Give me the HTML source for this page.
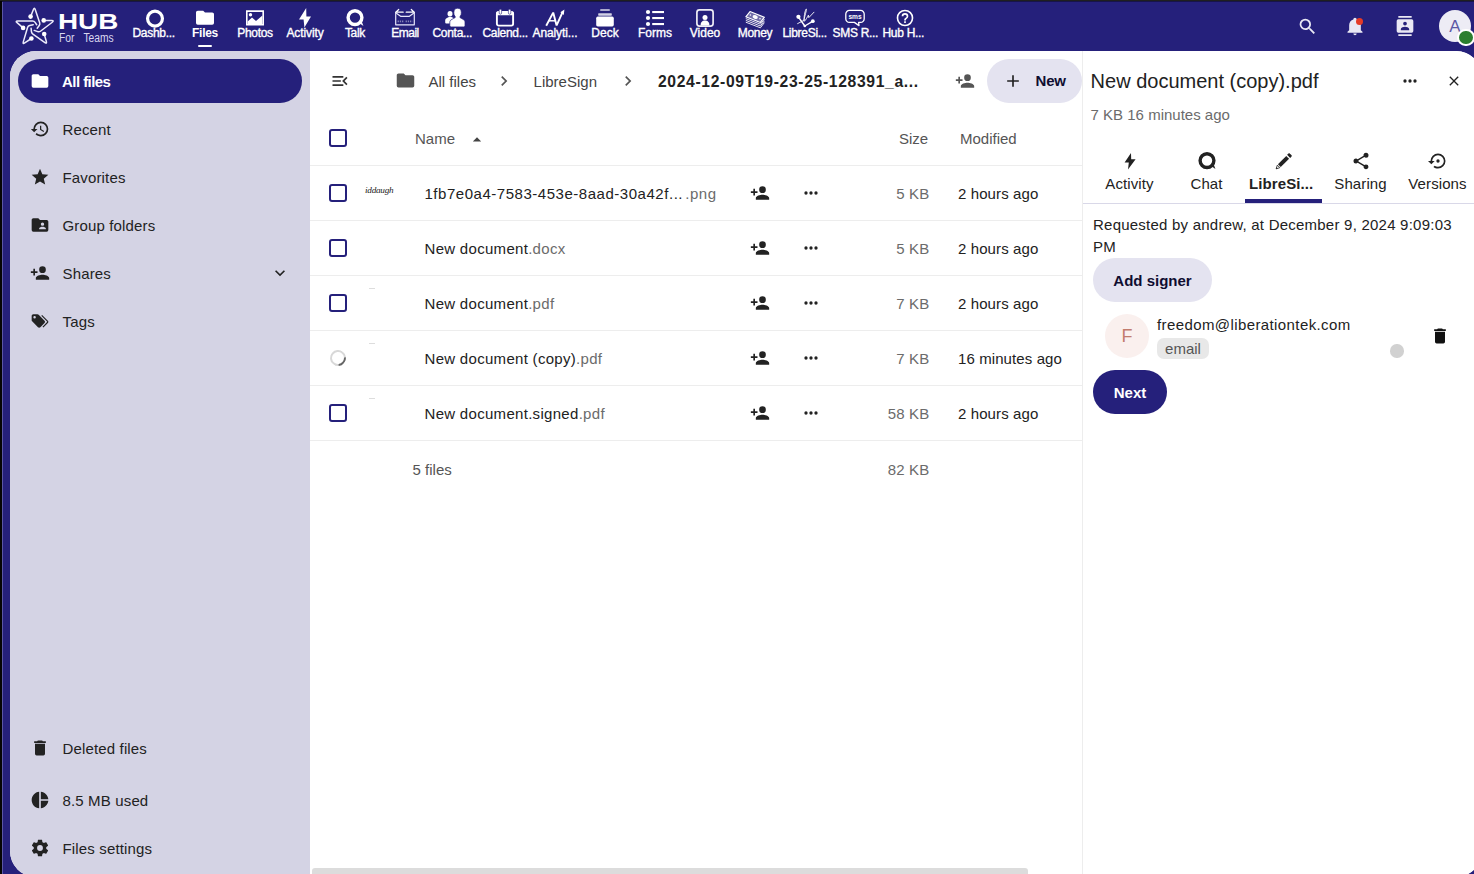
<!DOCTYPE html>
<html lang="en">
<head>
<meta charset="utf-8">
<title>Files - Hub For Teams</title>
<style>
*{box-sizing:border-box;margin:0;padding:0}
html,body{width:1474px;height:874px;overflow:hidden}
body{background:#25207b;font-family:"Liberation Sans",Arial,sans-serif;font-size:15px;color:#222;position:relative}
.abs{position:absolute}
#frame-l{left:0;top:0;width:2px;height:874px;background:#050505;z-index:50}
#frame-l2{left:2px;top:2px;width:1px;height:872px;background:#5a56a6;z-index:50}
#frame-t{left:0;top:0;width:1474px;height:1px;background:#1f1f1f;z-index:51}
#frame-t2{left:2px;top:1px;width:1472px;height:1px;background:#17144a;z-index:51}
/* header */
#header{left:0;top:2px;width:1474px;height:49px}
.app{position:absolute;top:0;width:50px;height:49px;color:#fff;text-align:center}
.app svg{position:absolute;left:15px;top:6px;width:20px;height:20px}
.app svg:not([fill]){fill:#fff}
.app span{position:absolute;left:-5px;width:60px;top:24px;font-size:12px;line-height:14px;letter-spacing:-.3px;white-space:nowrap;-webkit-text-stroke:.35px #fff}
.app span.tr{left:2.5px;text-align:left}
.app.active span{font-weight:bold;-webkit-text-stroke:0}
.app.active:after{content:"";position:absolute;left:18.4px;top:42.6px;width:13.4px;height:2.6px;border-radius:1.3px;background:#fff}

#hub{left:58px;top:9px;font-size:21.6px;line-height:22px;font-weight:bold;color:#fff;transform:scaleX(1.29);transform-origin:0 0;letter-spacing:0}
#forteams{left:58.7px;top:28.7px;font-size:12px;line-height:14px;color:#d9d8f0;white-space:nowrap;word-spacing:7.4px;transform:scaleX(.855);transform-origin:0 0}
.hi{fill:#e9e8f4}
#avatar{left:1439px;top:8.4px;width:32px;height:32px;border-radius:50%;background:#edecf5;color:#5c59a4;font-size:17px;line-height:34.6px;text-align:center}
#status{left:1457.4px;top:26.8px;width:17.4px;height:17.4px;border-radius:50%;background:#2b7e2f;border:2.1px solid #fff}
/* content container */
#content{left:10px;top:51px;width:1472px;height:826px;border-radius:26px;background:#fff;overflow:hidden}
#nav{left:0;top:0;width:300px;height:826px;background:#d4d3e4}
.nv{position:absolute;left:8px;width:284px;height:44px;border-radius:22px;font-size:15px;line-height:44px;color:#222;white-space:nowrap}
.nv svg{position:absolute;left:12px;top:12px;width:20px;height:20px;fill:#222}
.nv span{position:absolute;left:44.5px;top:1px;letter-spacing:.15px}
.nv.active span{letter-spacing:-.55px;left:44px}
.nv.active{background:#25207b;color:#fff;font-weight:bold}
.nv.active svg{fill:#fff}
/* main */
#main{left:300px;top:0;width:772px;height:826px;background:#fff}
.row{position:absolute;left:0;width:772px;height:55px;border-bottom:1px solid #ededed}
.cb{position:absolute;left:19px;width:18px;height:18px;border:2px solid #25207b;border-radius:3px;background:#fff}
.fn{position:absolute;left:114.5px;letter-spacing:.3px;font-size:15px;line-height:20px;white-space:nowrap;color:#222}
.fn i{font-style:normal;color:#6b6b6b}
.sz{position:absolute;right:152.5px;letter-spacing:.2px;font-size:15px;line-height:20px;color:#6b6b6b;white-space:nowrap;text-align:right}
.md{position:absolute;left:648px;letter-spacing:.1px;font-size:15px;line-height:20px;color:#222;white-space:nowrap}
.ic{position:absolute;fill:#222}

.bc{position:absolute;top:20.8px;font-size:15px;line-height:20px;color:#444;white-space:nowrap}
.bc.cur{font-weight:bold;color:#222;font-size:15.7px;letter-spacing:.65px}
#newbtn{left:677px;top:8px;width:95px;height:44px;border-radius:22px;background:#e4e3f0;font-weight:bold;color:#0f0d31}
#newbtn span{position:absolute;left:48.5px;top:12px;font-size:15px;line-height:20px;letter-spacing:-.2px}
.hd{position:absolute;top:17.5px;font-size:15px;line-height:20px;color:#555;white-space:nowrap}
.ft{position:absolute;font-size:15px;line-height:20px;color:#555;white-space:nowrap}
.spin{position:absolute;left:20px;top:19px;width:16px;height:16px;border-radius:50%;border:2px solid #d8d8d8;border-right-color:#666;transform:rotate(40deg)}
.sig{position:absolute;left:55px;top:18.4px;font-family:"Liberation Serif",serif;font-style:italic;font-size:9.2px;line-height:12px;color:#1a1a1a;letter-spacing:-.25px}
.pdfm{position:absolute;left:59px;top:12px;width:6px;height:1px;background:#ddd}
/* right sidebar */
#side{left:1072px;top:0;width:400px;height:826px;background:#fff}
#stitle{font-size:20px;line-height:24px;color:#222;white-space:nowrap}
#ssub{font-size:15px;line-height:20px;color:#6b6b6b;white-space:nowrap}
.tab{position:absolute;width:77px;height:52px;text-align:center;font-size:15px;color:#222}
.tab svg{position:absolute;left:28.5px;top:3.8px;fill:#222}
.tab span{position:absolute;left:0;width:77px;top:27px;line-height:20px;white-space:nowrap}
.tab.act span{font-weight:bold;left:4px;text-align:left}
.tab span{letter-spacing:.1px}
#req{width:372px;font-size:15px;line-height:22px;color:#222;letter-spacing:.23px}
.pill{height:44px;border-radius:22px;font-size:15px;font-weight:bold;text-align:center;line-height:44px;white-space:nowrap}
.pill span{position:relative;top:.5px}
#fav{width:44px;height:44px;border-radius:50%;background:#faf0ee;color:#c27c6e;font-size:18px;line-height:44px;text-align:center}
#mail{font-size:15px;line-height:20px;color:#222;white-space:nowrap;letter-spacing:.4px}
#chip{width:52px;height:21px;border-radius:7px;background:#e8e8e8;color:#555;font-size:15px;line-height:21px;text-align:center}
</style>
</head>
<body>
<div class="abs" id="frame-l"></div><div class="abs" id="frame-l2"></div>
<div class="abs" id="frame-t"></div><div class="abs" id="frame-t2"></div>

<div class="abs" id="header">
  <svg class="abs" style="left:12px;top:2px" width="48" height="44" viewBox="0 0 48 44" fill="none" stroke="#ecebfb" stroke-width="1.5" stroke-linejoin="round" stroke-linecap="round">
    <path d="M18.6,12.6L21.43,5.42Q22.38,3.00 23.21,5.46L27.69,18.68Q28.20,20.20 27.24,21.48L25.2,24.2"/>
    <path d="M31.7,16.4L39.73,16.61Q42.33,16.67 40.26,18.25L28.47,27.23Q27.20,28.20 25.69,27.66L22.2,26.4"/>
    <path d="M32.2,30L34.36,37.54Q35.08,40.04 32.95,38.55L20.91,30.12Q19.60,29.20 19.44,27.61L19.1,24.2"/>
    <path d="M19.4,34.5L12.71,38.92Q10.54,40.35 11.28,37.86L15.64,23.23Q16.10,21.70 17.67,21.39L21.2,20.7"/>
    <path d="M11.1,23.9L5.04,18.69Q3.07,16.99 5.67,17.01L20.60,17.09Q22.20,17.10 23.11,18.41L24.7,20.7"/>
    <g fill="#fff" stroke="none"><circle cx="18.6" cy="12.6" r="2.3"/><circle cx="31.7" cy="16.4" r="2.3"/><circle cx="32.2" cy="30" r="2.3"/><circle cx="19.4" cy="34.5" r="2.3"/><circle cx="11.1" cy="23.9" r="2.3"/></g>
  </svg>
  <div class="abs" id="hub">HUB</div>
  <div class="abs" id="forteams">For Teams</div>
  <div class="app" style="left:130px"><svg viewBox="0 0 20 20"><circle cx="10" cy="10.6" r="7.45" fill="none" stroke="#fff" stroke-width="3.2"/></svg><span class="tr">Dashb...</span></div>
  <div class="app active" style="left:180px"><svg viewBox="0 0 20 20"><path d="M8.2,2.8H2.8C1.8,2.8 1,3.6 1,4.6V15A1.8,1.8 0 0,0 2.8,16.8H17.2A1.8,1.8 0 0,0 19,15V6.4C19,5.4 18.2,4.6 17.2,4.6H10L8.2,2.8Z"/></svg><span>Files</span></div>
  <div class="app" style="left:230px"><svg viewBox="0 0 20 20"><path fill-rule="evenodd" d="M1,2.3H19V17.5H1Z M2.6,3.9V15.9H17.4V3.9Z"/><path d="M2.6,15.9V13.6L7,9.4L11,13L17.4,7.4V15.9Z"/><circle cx="5.5" cy="6.7" r="1.7"/></svg><span>Photos</span></div>
  <div class="app" style="left:280px"><svg viewBox="0 0 20 20"><path d="M11.2,0L4,11.4H8.6L9.4,19.6L16,8.4H11.4Z"/></svg><span style="letter-spacing:-0.1px">Activity</span></div>
  <div class="app" style="left:330px"><svg viewBox="0 0 20 20"><circle cx="10" cy="9.6" r="6.9" fill="none" stroke="#fff" stroke-width="3.4"/><path d="M13.5,14.5L18.4,17.9L16.4,12.4Z"/></svg><span>Talk</span></div>
  <div class="app" style="left:380px"><svg viewBox="0 0 20 20" fill="none" stroke="#e6e5fa" stroke-width="1.2" stroke-linejoin="round" stroke-linecap="round"><path d="M0.7,4.3V16.8H19.3V4.3"/><path d="M1.4,5.3L5.6,8.3H14.4L18.6,5.3"/><path d="M0.8,4.2H8.2M11.2,4.2H19.2M3.7,1.5L0.8,4.2M16.3,1.5L19.2,4.2" stroke="#fff"/><path d="M2.6,13.4H8.6M10.6,13.4H17.4" stroke-dasharray="1.3 .9" stroke-width="1.7" stroke-linecap="butt" opacity=".5"/></svg><span style="letter-spacing:-0.5px">Email</span></div>
  <div class="app" style="left:430px"><svg viewBox="0 0 20 20"><ellipse cx="5" cy="5.8" rx="2.5" ry="2.8"/><path d="M0.2,14.4V12.2C0.2,10.6 2.6,9.8 4,9.1H6.4C7.6,9.6 8.6,10 9.4,10.8V15.4H1.2A1,1 0 0,1 0.2,14.4Z"/><ellipse cx="12.6" cy="4.7" rx="3.75" ry="4.45" stroke="#25207b" stroke-width=".7"/><path d="M4.8,17.5V13.8C4.8,11.6 8.8,10.8 10.6,9.3H14.6C16.4,10.8 20,11.6 20,13.8V17.5A1.4,1.4 0 0,1 18.6,18.9H6.2A1.4,1.4 0 0,1 4.8,17.5Z" stroke="#25207b" stroke-width=".7"/><rect x="10.6" y="7.6" width="4" height="3" stroke="none"/></svg><span class="tr">Conta...</span></div>
  <div class="app" style="left:480px"><svg viewBox="0 0 20 20"><rect x="1.9" y="4" width="16.2" height="13.6" rx="1.8" fill="none" stroke="#fff" stroke-width="1.9"/><rect x="1.2" y="3.6" width="17.6" height="3.6" rx="1.6"/><rect x="4.2" y="1.2" width="2.4" height="5" rx="1.2" stroke="#25207b" stroke-width=".6"/><rect x="13.4" y="1.2" width="2.4" height="5" rx="1.2" stroke="#25207b" stroke-width=".6"/></svg><span class="tr">Calend...</span></div>
  <div class="app" style="left:530px"><svg viewBox="0 0 20 20" fill="none" stroke="#fff" stroke-width="1.9" stroke-linejoin="miter"><path d="M1.2,17.8L8.2,4.6L11.6,17.4L17.6,4.2" stroke-linejoin="bevel"/><path d="M3.6,12.8H10.2" stroke-width="1.5"/><path d="M19.4,1.6L18.8,7L15.4,4.2Z" fill="#fff" stroke="none"/></svg><span style="letter-spacing:-0.1px" class="tr">Analyti...</span></div>
  <div class="app" style="left:580px"><svg viewBox="0 0 20 20"><rect x="5.2" y="1" width="9.6" height="2.1" rx=".6" opacity=".62"/><rect x="3.2" y="5.2" width="13.6" height="2.5" rx=".6" opacity=".8"/><rect x="1.2" y="8.6" width="17.6" height="9.8" rx="1.6"/></svg><span style="letter-spacing:0.05px">Deck</span></div>
  <div class="app" style="left:630px"><svg viewBox="0 0 20 20"><circle cx="3" cy="4" r="2.1"/><circle cx="3" cy="10" r="2.1"/><circle cx="3" cy="16" r="2.1"/><rect x="7.2" y="3" width="11.8" height="2.1"/><rect x="7.2" y="9" width="11.8" height="2.1"/><rect x="7.2" y="15" width="11.8" height="2.1"/></svg><span style="letter-spacing:0px">Forms</span></div>
  <div class="app" style="left:680px"><svg viewBox="0 0 20 20"><rect x="1.9" y="1.9" width="16.2" height="16.2" rx="2.6" fill="none" stroke="#fff" stroke-width="1.7" opacity=".92"/><circle cx="10" cy="9.4" r="2.5"/><path d="M5.6,17.4C5.6,14 7.6,12.6 10,12.6C12.4,12.6 14.4,14 14.4,17.4Z"/></svg><span style="letter-spacing:0px">Video</span></div>
  <div class="app" style="left:730px"><svg style="top:7px" viewBox="0 0 20 20" fill="none" stroke="#fff" stroke-width="1.1" stroke-linejoin="round"><path d="M5,2.6L19.4,8.2L15.4,13.4L0.8,7.8Z" fill="#fff" fill-opacity=".35"/><ellipse cx="10.2" cy="8" rx="2.7" ry="1.9" transform="rotate(21 10.2 8)" fill="#fff" stroke="none"/><path d="M0.8,9.6L15.4,15.2L19.4,10M0.8,11.4L15.4,17L19.4,11.8M0.8,13.2L15.4,18.8L19.4,13.6" stroke-width=".9"/><circle cx="5.4" cy="6" r=".8" fill="#fff" stroke="none"/><circle cx="15" cy="9.8" r=".8" fill="#fff" stroke="none"/></svg><span>Money</span></div>
  <div class="app" style="left:780px"><svg viewBox="0 0 20 20" fill="none" stroke="#fff" stroke-width="1.1" stroke-linecap="round" stroke-linejoin="round"><path d="M3.4,9L9.8,18L17.6,13.4" stroke-width="1.4"/><circle cx="3.4" cy="8.8" r="2.1" fill="#fff" stroke="none"/><circle cx="17.8" cy="13.2" r="1.9" fill="#fff" stroke="none"/><circle cx="9.8" cy="18" r="1.3" fill="#fff" stroke="none"/><path d="M2.6,15.6L8.8,12.4C9.8,8 11.6,2.4 11.4,1C10.6,0.6 8.6,8 9.2,13.4C11,12 12.4,8.8 13.4,7.2L13.8,9.6L19,4.2" stroke-width=".9"/></svg><span class="tr">LibreSi...</span></div>
  <div class="app" style="left:830px"><svg viewBox="0 0 20 20"><path d="M4.4,2.4H15.6A3.6,3.6 0 0,1 19.2,6V10.8A3.6,3.6 0 0,1 15.6,14.4H13.6L14,17.6L9.4,14.4H4.4A3.6,3.6 0 0,1 0.8,10.8V6A3.6,3.6 0 0,1 4.4,2.4Z" fill="none" stroke="#fff" stroke-width="1.3" stroke-linejoin="round"/><text x="10" y="10.6" font-family="Liberation Sans,Arial,sans-serif" font-size="6.6" font-weight="bold" text-anchor="middle" fill="#fff">sms</text></svg><span class="tr">SMS R...</span></div>
  <div class="app" style="left:880px"><svg viewBox="0 0 24 24"><path d="M11,18H13V16H11V18M12,2A10,10 0 0,0 2,12A10,10 0 0,0 12,22A10,10 0 0,0 22,12A10,10 0 0,0 12,2M12,20C7.59,20 4,16.41 4,12C4,7.59 7.59,4 12,4C16.41,4 20,7.59 20,12C20,16.41 16.41,20 12,20M12,6A4,4 0 0,0 8,10H10A2,2 0 0,1 12,8A2,2 0 0,1 14,10C14,12 11,11.75 11,15H13C13,12.75 16,12.5 16,10A4,4 0 0,0 12,6Z"/></svg><span class="tr">Hub H...</span></div>
  <svg class="abs hi" style="left:1297px;top:14px" width="21" height="21" viewBox="0 0 24 24"><path d="M9.5,3A6.5,6.5 0 0,1 16,9.5C16,11.11 15.41,12.59 14.44,13.73L14.71,14H15.5L20.5,19L19,20.5L14,15.5V14.71L13.73,14.44C12.59,15.41 11.11,16 9.5,16A6.5,6.5 0 0,1 3,9.5A6.5,6.5 0 0,1 9.5,3M9.5,5C7,5 5,7 5,9.5C5,12 7,14 9.5,14C12,14 14,12 14,9.5C14,7 12,5 9.5,5Z"/></svg>
  <svg class="abs hi" style="left:1345px;top:14px" width="20" height="20" viewBox="0 0 24 24"><path d="M21,19V20H3V19L5,17V11C5,7.9 7.03,5.17 10,4.29C10,4.19 10,4.1 10,4A2,2 0 0,1 12,2A2,2 0 0,1 14,4C14,4.1 14,4.19 14,4.29C16.97,5.17 19,7.9 19,11V17L21,19M14,21A2,2 0 0,1 12,23A2,2 0 0,1 10,21"/></svg>
  <div class="abs" style="left:1356px;top:16px;width:7px;height:7px;border-radius:50%;background:#e53a27"></div>
  <svg class="abs hi" style="left:1395px;top:14px" width="20" height="20" viewBox="0 0 24 24"><path d="M20,0H4V2H20V0M4,24H20V22H4V24M20,4H4A2,2 0 0,0 2,6V18A2,2 0 0,0 4,20H20A2,2 0 0,0 22,18V6A2,2 0 0,0 20,4M12,6.75A2.25,2.25 0 0,1 14.25,9A2.25,2.25 0 0,1 12,11.25A2.25,2.25 0 0,1 9.75,9A2.25,2.25 0 0,1 12,6.75M17,17H7V15.5C7,13.83 10.33,13 12,13C13.67,13 17,13.83 17,15.5V17Z"/></svg>
  <div class="abs" id="avatar">A</div>
  <div class="abs" id="status"></div>
</div>

<div class="abs" id="content">
  <div class="abs" id="nav">
    <div class="nv active" style="top:8px"><svg viewBox="0 0 24 24"><path d="M10,4H4C2.89,4 2,4.89 2,6V18A2,2 0 0,0 4,20H20A2,2 0 0,0 22,18V8C22,6.89 21.1,6 20,6H12L10,4Z"/></svg><span>All files</span></div>
    <div class="nv" style="top:56px"><svg viewBox="0 0 24 24"><path d="M13.5,8H12V13L16.28,15.54L17,14.33L13.5,12.25V8M13,3A9,9 0 0,0 4,12H1L4.96,16.03L9,12H6A7,7 0 0,1 13,5A7,7 0 0,1 20,12A7,7 0 0,1 13,19C11.07,19 9.32,18.21 8.06,16.94L6.64,18.36C8.27,20 10.5,21 13,21A9,9 0 0,0 22,12A9,9 0 0,0 13,3"/></svg><span>Recent</span></div>
    <div class="nv" style="top:104px"><svg viewBox="0 0 24 24"><path d="M12,17.27L18.18,21L16.54,13.97L22,9.24L14.81,8.62L12,2L9.19,8.62L2,9.24L7.45,13.97L5.82,21L12,17.27Z"/></svg><span>Favorites</span></div>
    <div class="nv" style="top:152px"><svg viewBox="0 0 24 24"><path d="M19,17H11V16C11,14.67 13.67,14 15,14C16.33,14 19,14.67 19,16M15,9A2,2 0 0,1 17,11A2,2 0 0,1 15,13A2,2 0 0,1 13,11C13,9.89 13.9,9 15,9M20,6H12L10,4H4C2.89,4 2,4.89 2,6V18A2,2 0 0,0 4,20H20A2,2 0 0,0 22,18V8C22,6.89 21.1,6 20,6Z"/></svg><span>Group folders</span></div>
    <div class="nv" style="top:200px"><svg viewBox="0 0 24 24"><path d="M15,14C12.33,14 7,15.33 7,18V20H23V18C23,15.33 17.67,14 15,14M6,10V7H4V10H1V12H4V15H6V12H9V10M15,12A4,4 0 0,0 19,8A4,4 0 0,0 15,4A4,4 0 0,0 11,8A4,4 0 0,0 15,12Z"/></svg><span>Shares</span><svg style="left:252px" viewBox="0 0 24 24"><path d="M7.41,8.58L12,13.17L16.59,8.58L18,10L12,16L6,10L7.41,8.58Z"/></svg></div>
    <div class="nv" style="top:248px"><svg viewBox="0 0 24 24"><path d="M5.5,9A1.5,1.5 0 0,0 7,7.5A1.5,1.5 0 0,0 5.5,6A1.5,1.5 0 0,0 4,7.5A1.5,1.5 0 0,0 5.5,9M17.41,11.58C17.77,11.94 18,12.44 18,13C18,13.55 17.78,14.05 17.41,14.41L12.41,19.41C12.05,19.77 11.55,20 11,20C10.45,20 9.95,19.78 9.58,19.41L2.59,12.42C2.22,12.05 2,11.55 2,11V6C2,4.89 2.89,4 4,4H9C9.55,4 10.05,4.22 10.41,4.58L17.41,11.58M13.54,5.71L14.54,4.71L21.41,11.58C21.78,11.94 22,12.45 22,13C22,13.55 21.78,14.05 21.42,14.41L16.04,19.79L15.04,18.79L20.75,13L13.54,5.71Z"/></svg><span>Tags</span></div>
    <div class="nv" style="top:675px"><svg viewBox="0 0 24 24"><path d="M19,4H15.5L14.5,3H9.5L8.5,4H5V6H19M6,19A2,2 0 0,0 8,21H16A2,2 0 0,0 18,19V7H6V19Z"/></svg><span>Deleted files</span></div>
    <div class="nv" style="top:727px"><svg viewBox="0 0 24 24"><path d="M11,2V22C5.9,21.5 2,17.2 2,12C2,6.8 5.9,2.5 11,2M13,2V11H22C21.5,6.2 17.8,2.5 13,2M13,13V22C17.7,21.5 21.5,17.8 22,13H13Z"/></svg><span>8.5 MB used</span></div>
    <div class="nv" style="top:775px"><svg viewBox="0 0 24 24"><path d="M12,15.5A3.5,3.5 0 0,1 8.5,12A3.5,3.5 0 0,1 12,8.5A3.5,3.5 0 0,1 15.5,12A3.5,3.5 0 0,1 12,15.5M19.43,12.97C19.47,12.65 19.5,12.33 19.5,12C19.5,11.67 19.47,11.34 19.43,11L21.54,9.37C21.73,9.22 21.78,8.95 21.66,8.73L19.66,5.27C19.54,5.05 19.27,4.96 19.05,5.05L16.56,6.05C16.04,5.66 15.5,5.32 14.87,5.07L14.5,2.42C14.46,2.18 14.25,2 14,2H10C9.75,2 9.54,2.18 9.5,2.42L9.13,5.07C8.5,5.32 7.96,5.66 7.44,6.05L4.95,5.05C4.73,4.96 4.46,5.05 4.34,5.27L2.34,8.73C2.21,8.95 2.27,9.22 2.46,9.37L4.57,11C4.53,11.34 4.5,11.67 4.5,12C4.5,12.33 4.53,12.65 4.57,12.97L2.46,14.63C2.27,14.78 2.21,15.05 2.34,15.27L4.34,18.73C4.46,18.95 4.73,19.03 4.95,18.95L7.44,17.94C7.96,18.34 8.5,18.68 9.13,18.93L9.5,21.58C9.54,21.82 9.75,22 10,22H14C14.25,22 14.46,21.82 14.5,21.58L14.87,18.93C15.5,18.67 16.04,18.34 16.56,17.94L19.05,18.95C19.27,19.03 19.54,18.95 19.66,18.73L21.66,15.27C21.78,15.05 21.73,14.78 21.54,14.63L19.43,12.97Z"/></svg><span>Files settings</span></div>
  </div>
  <div class="abs" id="main">
    <svg class="ic" style="left:19.6px;top:20px;fill:#333" width="20" height="20" viewBox="0 0 24 24"><path d="M21,15.61L19.59,17L14.58,12L19.59,7L21,8.39L17.44,12L21,15.61M3,6H16V8H3V6M3,13V11H13V13H3M3,18V16H16V18H3Z"/></svg>
    <svg class="ic" style="left:85.4px;top:19.4px;fill:#555" width="21" height="21" viewBox="0 0 24 24"><path d="M10,4H4C2.89,4 2,4.89 2,6V18A2,2 0 0,0 4,20H20A2,2 0 0,0 22,18V8C22,6.89 21.1,6 20,6H12L10,4Z"/></svg>
    <div class="bc" style="left:118.5px">All files</div>
    <svg class="ic" style="left:183.5px;top:20px;fill:#555" width="20" height="20" viewBox="0 0 24 24"><path d="M8.59,16.58L13.17,12L8.59,7.41L10,6L16,12L10,18L8.59,16.58Z"/></svg>
    <div class="bc" style="left:223.6px">LibreSign</div>
    <svg class="ic" style="left:308px;top:20px;fill:#555" width="20" height="20" viewBox="0 0 24 24"><path d="M8.59,16.58L13.17,12L8.59,7.41L10,6L16,12L10,18L8.59,16.58Z"/></svg>
    <div class="bc cur" style="left:348px">2024-12-09T19-23-25-128391_a...</div>
    <svg class="ic" style="left:645px;top:20px;fill:#555" width="20" height="20" viewBox="0 0 24 24"><path d="M15,14C12.33,14 7,15.33 7,18V20H23V18C23,15.33 17.67,14 15,14M6,10V7H4V10H1V12H4V15H6V12H9V10M15,12A4,4 0 0,0 19,8A4,4 0 0,0 15,4A4,4 0 0,0 11,8A4,4 0 0,0 15,12Z"/></svg>
    <div class="abs" id="newbtn"><svg class="ic" style="left:16px;top:12px;fill:#222" width="20" height="20" viewBox="0 0 24 24"><path d="M19,13H13V19H11V13H5V11H11V5H13V11H19V13Z"/></svg><span>New</span></div>

    <div class="row" style="top:60px">
      <div class="cb" style="top:18px"></div>
      <div class="hd" style="left:105px">Name</div>
      <svg class="ic" style="left:157px;top:18px;fill:#444" width="20" height="20" viewBox="0 0 24 24"><path d="M7,15L12,10L17,15H7Z"/></svg>
      <div class="hd" style="left:589px">Size</div>
      <div class="hd" style="left:650px">Modified</div>
    </div>
    <div class="row" style="top:115px"><div class="cb" style="top:18px"></div><div class="sig">iddaugh</div>
      <div class="fn" style="top:17.5px;letter-spacing:.53px">1fb7e0a4-7583-453e-8aad-30a42f...<i style="margin-left:-2.5px"> .png</i></div>
      <svg class="ic" style="left:440px;top:17px" width="20" height="20" viewBox="0 0 24 24"><path d="M15,14C12.33,14 7,15.33 7,18V20H23V18C23,15.33 17.67,14 15,14M6,10V7H4V10H1V12H4V15H6V12H9V10M15,12A4,4 0 0,0 19,8A4,4 0 0,0 15,4A4,4 0 0,0 11,8A4,4 0 0,0 15,12Z"/></svg>
      <svg class="ic" style="left:491px;top:17px" width="20" height="20" viewBox="0 0 24 24"><path d="M16,12A2,2 0 0,1 18,10A2,2 0 0,1 20,12A2,2 0 0,1 18,14A2,2 0 0,1 16,12M10,12A2,2 0 0,1 12,10A2,2 0 0,1 14,12A2,2 0 0,1 12,14A2,2 0 0,1 10,12M4,12A2,2 0 0,1 6,10A2,2 0 0,1 8,12A2,2 0 0,1 6,14A2,2 0 0,1 4,12Z"/></svg>
      <div class="sz" style="top:17.5px">5 KB</div>
      <div class="md" style="top:17.5px">2 hours ago</div>
    </div>
    <div class="row" style="top:170px"><div class="cb" style="top:18px"></div>
      <div class="fn" style="top:17.5px">New document<i>.docx</i></div>
      <svg class="ic" style="left:440px;top:17px" width="20" height="20" viewBox="0 0 24 24"><path d="M15,14C12.33,14 7,15.33 7,18V20H23V18C23,15.33 17.67,14 15,14M6,10V7H4V10H1V12H4V15H6V12H9V10M15,12A4,4 0 0,0 19,8A4,4 0 0,0 15,4A4,4 0 0,0 11,8A4,4 0 0,0 15,12Z"/></svg>
      <svg class="ic" style="left:491px;top:17px" width="20" height="20" viewBox="0 0 24 24"><path d="M16,12A2,2 0 0,1 18,10A2,2 0 0,1 20,12A2,2 0 0,1 18,14A2,2 0 0,1 16,12M10,12A2,2 0 0,1 12,10A2,2 0 0,1 14,12A2,2 0 0,1 12,14A2,2 0 0,1 10,12M4,12A2,2 0 0,1 6,10A2,2 0 0,1 8,12A2,2 0 0,1 6,14A2,2 0 0,1 4,12Z"/></svg>
      <div class="sz" style="top:17.5px">5 KB</div>
      <div class="md" style="top:17.5px">2 hours ago</div>
    </div>
    <div class="row" style="top:225px"><div class="cb" style="top:18px"></div><div class="pdfm"></div>
      <div class="fn" style="top:17.5px">New document<i>.pdf</i></div>
      <svg class="ic" style="left:440px;top:17px" width="20" height="20" viewBox="0 0 24 24"><path d="M15,14C12.33,14 7,15.33 7,18V20H23V18C23,15.33 17.67,14 15,14M6,10V7H4V10H1V12H4V15H6V12H9V10M15,12A4,4 0 0,0 19,8A4,4 0 0,0 15,4A4,4 0 0,0 11,8A4,4 0 0,0 15,12Z"/></svg>
      <svg class="ic" style="left:491px;top:17px" width="20" height="20" viewBox="0 0 24 24"><path d="M16,12A2,2 0 0,1 18,10A2,2 0 0,1 20,12A2,2 0 0,1 18,14A2,2 0 0,1 16,12M10,12A2,2 0 0,1 12,10A2,2 0 0,1 14,12A2,2 0 0,1 12,14A2,2 0 0,1 10,12M4,12A2,2 0 0,1 6,10A2,2 0 0,1 8,12A2,2 0 0,1 6,14A2,2 0 0,1 4,12Z"/></svg>
      <div class="sz" style="top:17.5px">7 KB</div>
      <div class="md" style="top:17.5px">2 hours ago</div>
    </div>
    <div class="row" style="top:280px"><div class="spin"></div><div class="pdfm"></div>
      <div class="fn" style="top:17.5px">New document (copy)<i>.pdf</i></div>
      <svg class="ic" style="left:440px;top:17px" width="20" height="20" viewBox="0 0 24 24"><path d="M15,14C12.33,14 7,15.33 7,18V20H23V18C23,15.33 17.67,14 15,14M6,10V7H4V10H1V12H4V15H6V12H9V10M15,12A4,4 0 0,0 19,8A4,4 0 0,0 15,4A4,4 0 0,0 11,8A4,4 0 0,0 15,12Z"/></svg>
      <svg class="ic" style="left:491px;top:17px" width="20" height="20" viewBox="0 0 24 24"><path d="M16,12A2,2 0 0,1 18,10A2,2 0 0,1 20,12A2,2 0 0,1 18,14A2,2 0 0,1 16,12M10,12A2,2 0 0,1 12,10A2,2 0 0,1 14,12A2,2 0 0,1 12,14A2,2 0 0,1 10,12M4,12A2,2 0 0,1 6,10A2,2 0 0,1 8,12A2,2 0 0,1 6,14A2,2 0 0,1 4,12Z"/></svg>
      <div class="sz" style="top:17.5px">7 KB</div>
      <div class="md" style="top:17.5px">16 minutes ago</div>
    </div>
    <div class="row" style="top:335px"><div class="cb" style="top:18px"></div><div class="pdfm"></div>
      <div class="fn" style="top:17.5px">New document.signed<i>.pdf</i></div>
      <svg class="ic" style="left:440px;top:17px" width="20" height="20" viewBox="0 0 24 24"><path d="M15,14C12.33,14 7,15.33 7,18V20H23V18C23,15.33 17.67,14 15,14M6,10V7H4V10H1V12H4V15H6V12H9V10M15,12A4,4 0 0,0 19,8A4,4 0 0,0 15,4A4,4 0 0,0 11,8A4,4 0 0,0 15,12Z"/></svg>
      <svg class="ic" style="left:491px;top:17px" width="20" height="20" viewBox="0 0 24 24"><path d="M16,12A2,2 0 0,1 18,10A2,2 0 0,1 20,12A2,2 0 0,1 18,14A2,2 0 0,1 16,12M10,12A2,2 0 0,1 12,10A2,2 0 0,1 14,12A2,2 0 0,1 12,14A2,2 0 0,1 10,12M4,12A2,2 0 0,1 6,10A2,2 0 0,1 8,12A2,2 0 0,1 6,14A2,2 0 0,1 4,12Z"/></svg>
      <div class="sz" style="top:17.5px">58 KB</div>
      <div class="md" style="top:17.5px">2 hours ago</div>
    </div>
    <div class="ft" style="left:102.6px;top:408.5px">5 files</div>
    <div class="sz" style="top:408.5px">82 KB</div>
    <div class="abs" style="left:2px;top:817px;width:716px;height:8px;border-radius:3px;background:#dcdcdc"></div>
  </div>
  <div class="abs" id="side">
    <div class="abs" style="left:0;top:0;width:1px;height:826px;background:#ededed"></div>
    <div class="abs" id="stitle" style="left:8.6px;top:18px">New document (copy).pdf</div>
    <svg class="ic" style="left:318px;top:20px" width="20" height="20" viewBox="0 0 24 24"><path d="M16,12A2,2 0 0,1 18,10A2,2 0 0,1 20,12A2,2 0 0,1 18,14A2,2 0 0,1 16,12M10,12A2,2 0 0,1 12,10A2,2 0 0,1 14,12A2,2 0 0,1 12,14A2,2 0 0,1 10,12M4,12A2,2 0 0,1 6,10A2,2 0 0,1 8,12A2,2 0 0,1 6,14A2,2 0 0,1 4,12Z"/></svg>
    <svg class="ic" style="left:364px;top:22px" width="16" height="16" viewBox="0 0 24 24"><path d="M19,6.41L17.59,5L12,10.59L6.41,5L5,6.41L10.59,12L5,17.59L6.41,19L12,13.41L17.59,19L19,17.59L13.41,12L19,6.41Z"/></svg>
    <div class="abs" id="ssub" style="left:8.6px;top:54px">7 KB 16 minutes ago</div>
    <div class="tab" style="left:9px;top:96px"><svg viewBox="0 0 20 20" width="20" height="20"><path d="M11,2L4.6,11.4H8.8L8,18.4L15.6,8.2H11.2Z"/></svg><span>Activity</span></div>
    <div class="tab" style="left:86px;top:96px"><svg viewBox="0 0 20 20" width="20" height="20"><circle cx="10" cy="9.6" r="6.9" fill="none" stroke="#222" stroke-width="3.4"/><path d="M13.5,14.5L18.4,17.9L16.4,12.4Z"/></svg><span>Chat</span></div>
    <div class="tab act" style="left:163px;top:96px"><svg viewBox="0 0 24 24" width="20" height="20"><path d="M21.1,6.6C21.5,6.2 21.5,5.5 21.1,5.1L18.9,2.9C18.5,2.5 17.8,2.5 17.4,2.9L15.7,4.6L19.4,8.3Z"/><path d="M14.7,5.9L18.1,9.3L8.1,19.3L4.7,15.9Z"/><path d="M4,17L7,20L2.6,21.4Z" fill="none" stroke="#222" stroke-width="1"/><path d="M2.4,21.6L3,19.6L4.4,21Z"/></svg><span>LibreSi...</span></div>
    <div class="tab" style="left:240px;top:96px"><svg viewBox="0 0 24 24" width="20" height="20"><path d="M18,16.08C17.24,16.08 16.56,16.38 16.04,16.85L8.91,12.7C8.96,12.47 9,12.24 9,12C9,11.76 8.96,11.53 8.91,11.3L15.96,7.19C16.5,7.69 17.21,8 18,8A3,3 0 0,0 21,5A3,3 0 0,0 18,2A3,3 0 0,0 15,5C15,5.24 15.04,5.47 15.09,5.7L8.04,9.81C7.5,9.31 6.79,9 6,9A3,3 0 0,0 3,12A3,3 0 0,0 6,15C6.79,15 7.5,14.69 8.04,14.19L15.16,18.34C15.11,18.55 15.08,18.77 15.08,19C15.08,20.61 16.39,21.91 18,21.91C19.61,21.91 20.92,20.61 20.92,19A2.92,2.92 0 0,0 18,16.08Z"/></svg><span>Sharing</span></div>
    <div class="tab" style="left:317px;top:96px"><svg viewBox="0 0 24 24" width="20" height="20"><path d="M12,3A9,9 0 0,0 3,12H0L4,16L8,12H5A7,7 0 0,1 12,5A7,7 0 0,1 19,12A7,7 0 0,1 12,19C10.5,19 9.09,18.5 7.94,17.7L6.5,19.14C8.04,20.3 9.94,21 12,21A9,9 0 0,0 21,12A9,9 0 0,0 12,3M14,12A2,2 0 0,0 12,10A2,2 0 0,0 10,12A2,2 0 0,0 12,14A2,2 0 0,0 14,12Z"/></svg><span>Versions</span></div>
    <div class="abs" style="left:1px;top:152px;width:400px;height:1px;background:#d9d8e8"></div>
    <div class="abs" style="left:163px;top:148px;width:77px;height:4px;background:#25207b"></div>
    <div class="abs" id="req" style="left:11px;top:163.4px">Requested by andrew, at December 9, 2024 9:09:03 PM</div>
    <div class="abs pill" style="left:11px;top:207px;width:119px;background:#e4e3f0;color:#0f0d31"><span>Add signer</span></div>
    <div class="abs" id="fav" style="left:23px;top:263px">F</div>
    <div class="abs" id="mail" style="left:75px;top:263.5px">freedom@liberationtek.com</div>
    <div class="abs" id="chip" style="left:75px;top:287px">email</div>
    <div class="abs" style="left:308.2px;top:293.4px;width:13.4px;height:13.4px;border-radius:50%;background:#d1d1d1"></div>
    <svg class="ic" style="left:348px;top:275px;fill:#111" width="20" height="20" viewBox="0 0 24 24"><path d="M19,4H15.5L14.5,3H9.5L8.5,4H5V6H19M6,19A2,2 0 0,0 8,21H16A2,2 0 0,0 18,19V7H6V19Z"/></svg>
    <div class="abs pill" style="left:11px;top:319px;width:74px;background:#25207b;color:#fff"><span>Next</span></div>
  </div>
</div>
</body>
</html>
